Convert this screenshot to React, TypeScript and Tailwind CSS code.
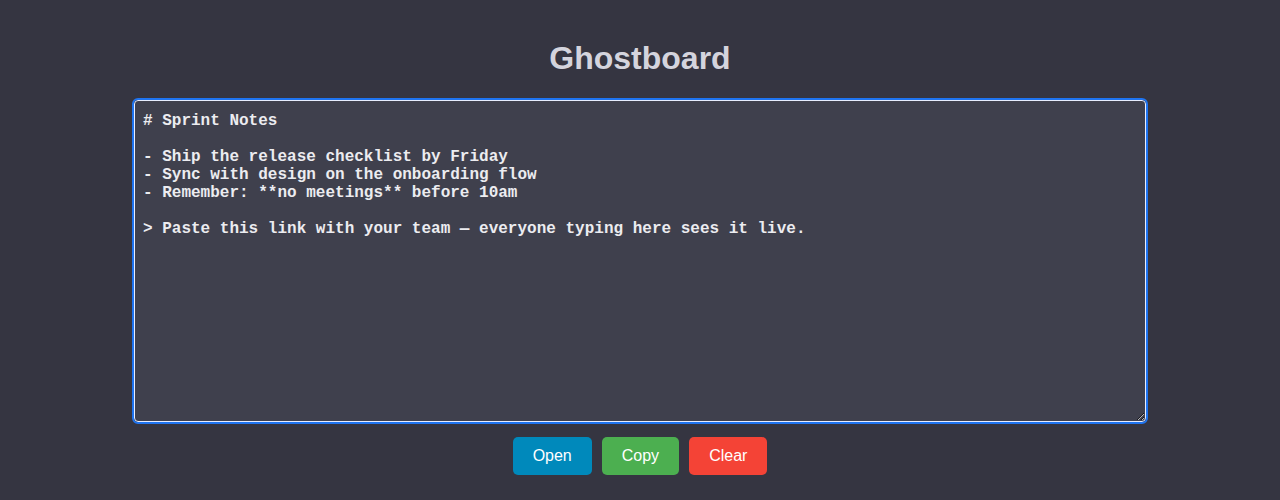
import React, { useState } from 'react';

const initialText = `# Sprint Notes

- Ship the release checklist by Friday
- Sync with design on the onboarding flow
- Remember: **no meetings** before 10am

> Paste this link with your team — everyone typing here sees it live.`;

export default function App() {
  const [text, setText] = useState(initialText);

  return (
    <div className="min-h-[500px] bg-[#353541] flex flex-col items-center pt-[40px] font-['Liberation_Sans',Arial,sans-serif]">
      <h1 className="text-[32px] leading-[37px] font-bold text-[#d4d4dd] mb-[23px]">Ghostboard</h1>

      {/* Editor */}
      <textarea
        value={text}
        onChange={(e) => setText(e.target.value)}
        spellCheck={false}
        className="block w-[1012px] h-[322px] rounded-[4px] border border-[#e8eeff] outline-2 outline-[#1f74f0] bg-[#3f404d] text-[#ececf0] pt-[11px] px-2 pb-2 text-[16px] leading-[18px] font-bold font-['Liberation_Mono','Courier_New',monospace] resize-y"
      />

      {/* Actions */}
      <div className="flex gap-[10px] mt-[15px]">
        <button className="px-5 h-[38px] rounded-[5px] bg-[#0089bb] text-white text-[16px]">Open</button>
        <button className="px-5 h-[38px] rounded-[5px] bg-[#4caf50] text-white text-[16px]">Copy</button>
        <button className="px-5 h-[38px] rounded-[5px] bg-[#f44336] text-white text-[16px]">Clear</button>
      </div>
    </div>
  );
}
